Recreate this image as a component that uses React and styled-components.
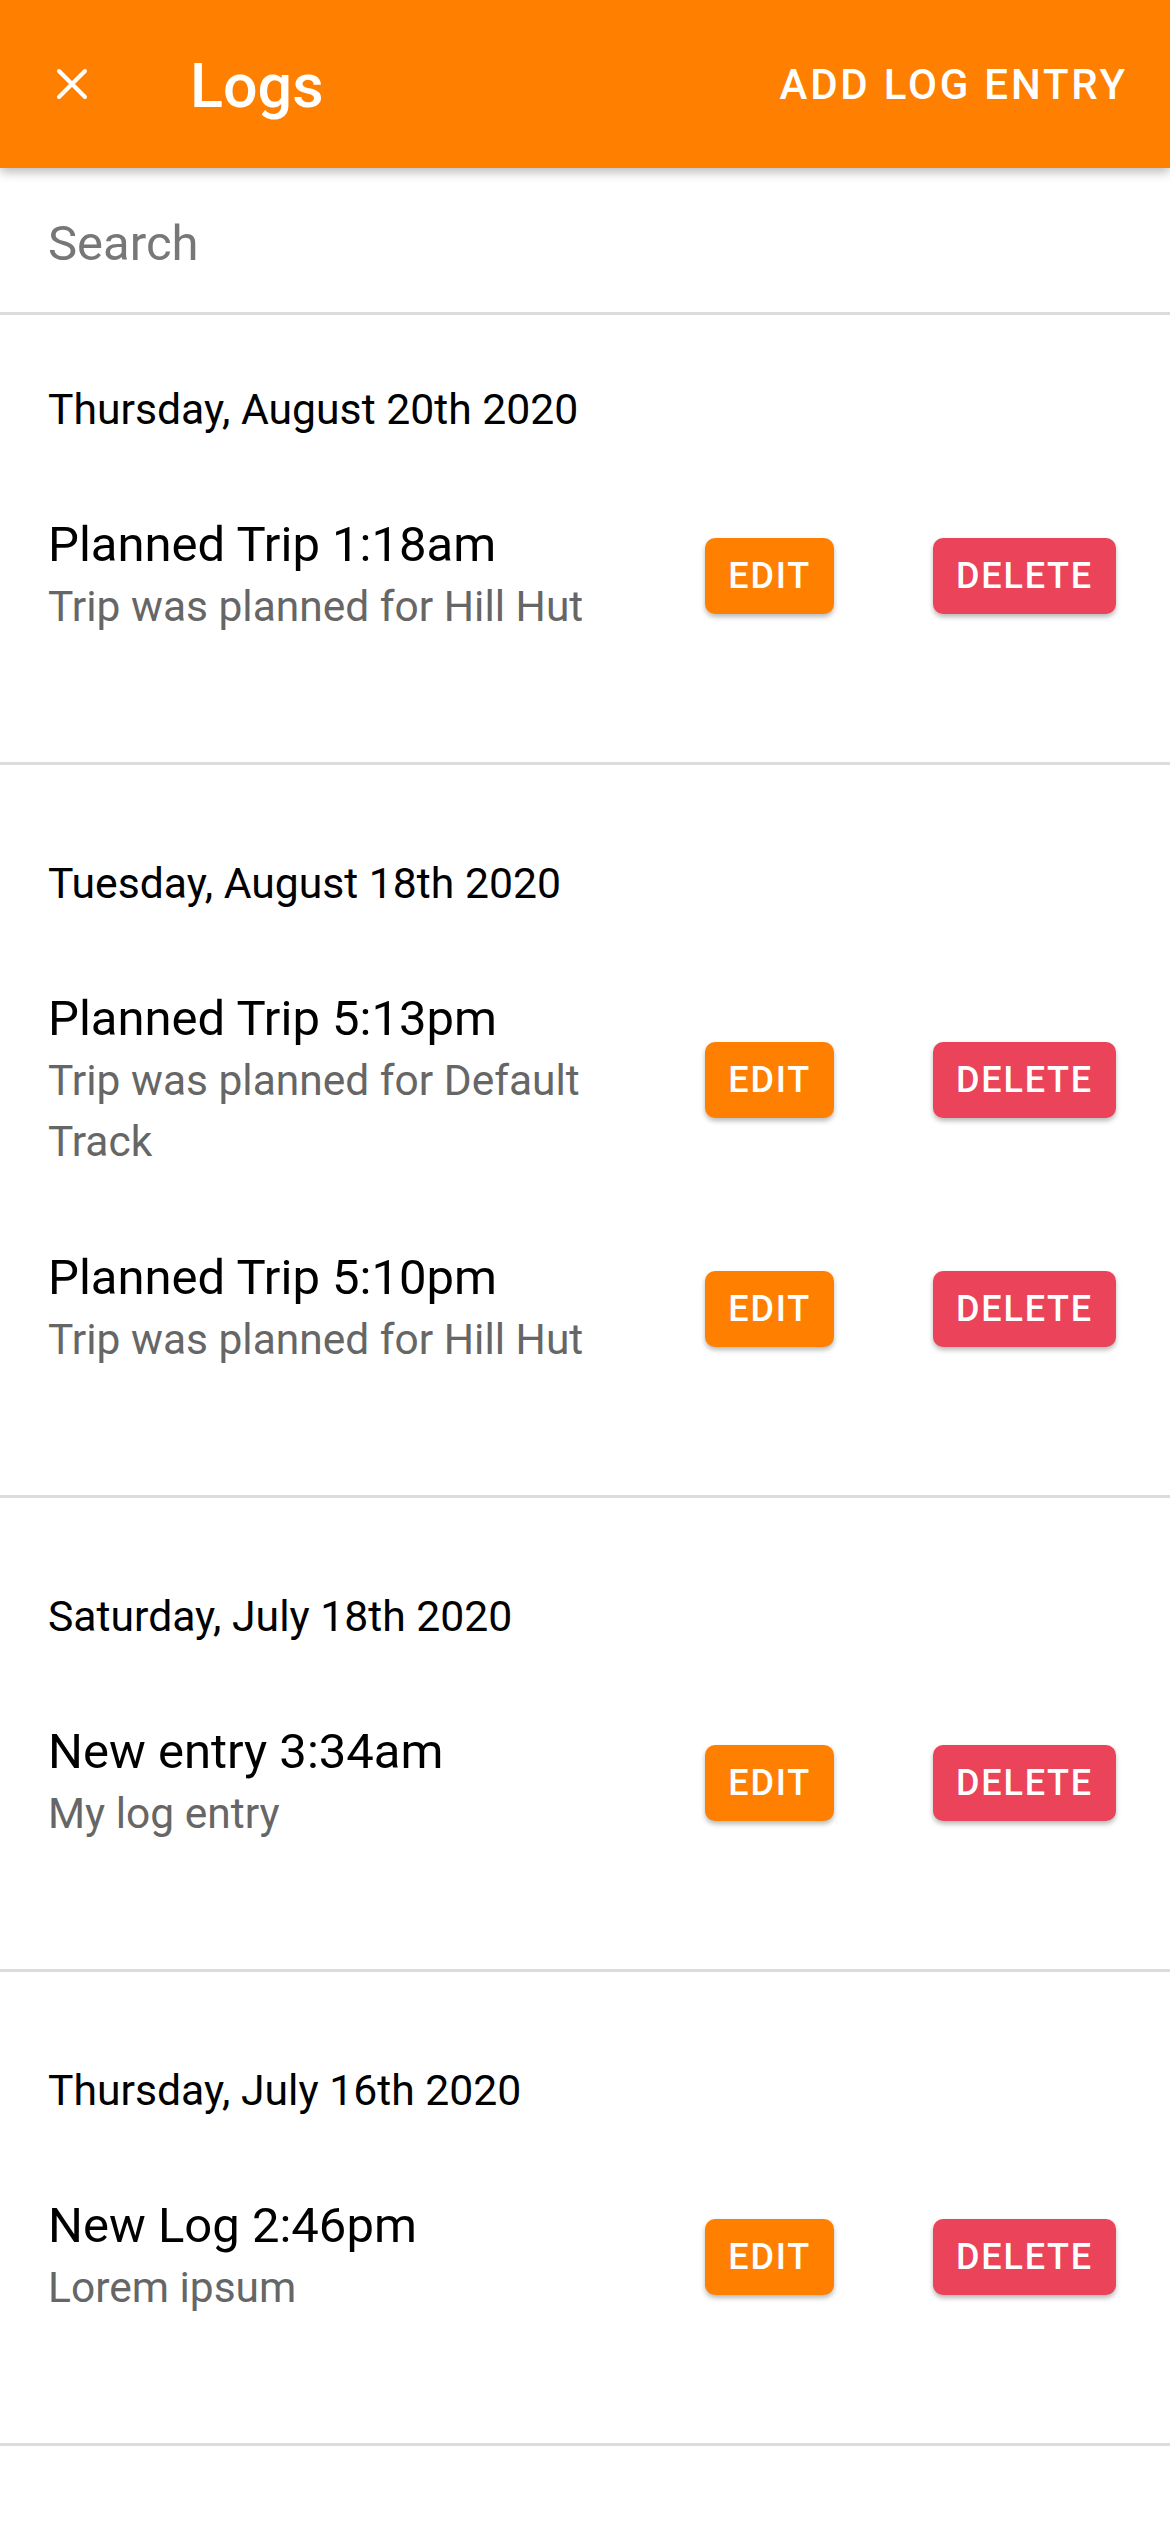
import React from 'react';
import styled, { createGlobalStyle } from 'styled-components';

const logs = [
  {
    date: 'Thursday, August 20th 2020',
    entries: [{ title: 'Planned Trip 1:18am', text: 'Trip was planned for Hill Hut' }],
  },
  {
    date: 'Tuesday, August 18th 2020',
    entries: [
      { title: 'Planned Trip 5:13pm', text: 'Trip was planned for Default Track' },
      { title: 'Planned Trip 5:10pm', text: 'Trip was planned for Hill Hut' },
    ],
  },
  {
    date: 'Saturday, July 18th 2020',
    entries: [{ title: 'New entry 3:34am', text: 'My log entry' }],
  },
  {
    date: 'Thursday, July 16th 2020',
    entries: [{ title: 'New Log 2:46pm', text: 'Lorem ipsum' }],
  },
];

export default function App() {
  return (
    <>
      <GlobalStyle />
      <Page>
        <Header>
          <CloseButton aria-label="Close">
            <svg width="32" height="32" viewBox="0 0 32 32">
              <path
                d="M3 3 L29 29 M29 3 L3 29"
                stroke="#fff"
                strokeWidth="4"
                strokeLinecap="round"
                fill="none"
              />
            </svg>
          </CloseButton>
          <Title>Logs</Title>
          <HeaderAction>Add log entry</HeaderAction>
        </Header>

        <SearchBar>
          <SearchInput placeholder="Search" />
        </SearchBar>

        {logs.map((group, i) => (
          <Section key={group.date} first={i === 0}>
            <DateLabel>{group.date}</DateLabel>
            {group.entries.map((entry) => (
              <Entry key={entry.title}>
                <EntryText>
                  <EntryTitle>{entry.title}</EntryTitle>
                  <EntryBody>{entry.text}</EntryBody>
                </EntryText>
                <Actions>
                  <ActionButton color="#ff8000">Edit</ActionButton>
                  <ActionButton color="#ea435a">Delete</ActionButton>
                </Actions>
              </Entry>
            ))}
          </Section>
        ))}
      </Page>
    </>
  );
}

const GlobalStyle = createGlobalStyle`
  * {
    box-sizing: border-box;
  }

  body {
    margin: 0;
    background: #fff;
    font-family: Roboto, "Noto Sans", sans-serif;
  }
`;

const Page = styled.div`
  display: flex;
  flex-direction: column;
  min-height: 2532px;
  background: #fff;
`;

const Header = styled.header`
  position: relative;
  z-index: 2;
  display: flex;
  align-items: center;
  height: 168px;
  padding: 0 42px 0 56px;
  background: #ff8000;
  box-shadow: 0 4px 10px rgba(0, 0, 0, 0.28);
`;

const CloseButton = styled.button`
  display: flex;
  align-items: center;
  justify-content: center;
  width: 32px;
  height: 32px;
  padding: 0;
  border: 0;
  background: none;
`;

const Title = styled.h1`
  flex: 1;
  margin: 4px 0 0 102px;
  color: #fff;
  font-size: 61px;
  font-weight: 500;
  line-height: 70px;
`;

const HeaderAction = styled.button`
  padding: 0;
  border: 0;
  background: none;
  color: #fff;
  font-family: Roboto, sans-serif;
  font-size: 42px;
  font-weight: 500;
  letter-spacing: 2.8px;
  text-transform: uppercase;
`;

const SearchBar = styled.div`
  display: flex;
  align-items: center;
  height: 147px;
  padding: 8px 48px 0;
  border-bottom: 3px solid #dcdcdc;
`;

const SearchInput = styled.input`
  width: 100%;
  padding: 0;
  border: 0;
  outline: none;
  background: transparent;
  color: #222;
  font-family: Roboto, sans-serif;
  font-size: 49px;
  line-height: 60px;

  &::placeholder {
    color: #777;
  }
`;

const Section = styled.section`
  display: flex;
  flex-direction: column;
  gap: 75px;
  padding: ${(props) => (props.first ? '64px' : '88px')} 54px 125px 48px;
  border-bottom: 3px solid #dcdcdc;
`;

const DateLabel = styled.div`
  color: #000;
  font-size: 42.7px;
  line-height: 60px;
`;

const Entry = styled.div`
  display: flex;
  align-items: center;
`;

const EntryText = styled.div`
  flex: 1;
  min-width: 0;
  padding-right: 40px;
`;

const EntryTitle = styled.div`
  color: #000;
  font-size: 49px;
  line-height: 62px;
`;

const EntryBody = styled.div`
  color: #666;
  font-size: 42.5px;
  line-height: 61px;
`;

const Actions = styled.div`
  display: flex;
  gap: 99px;
`;

const ActionButton = styled.button`
  height: 76px;
  padding: 0 23px;
  border: 0;
  border-radius: 10px;
  background: ${(props) => props.color};
  box-shadow: 0 3px 5px rgba(0, 0, 0, 0.28);
  color: #fff;
  font-family: Roboto, sans-serif;
  font-size: 36px;
  font-weight: 500;
  letter-spacing: 1.8px;
  text-transform: uppercase;
`;
